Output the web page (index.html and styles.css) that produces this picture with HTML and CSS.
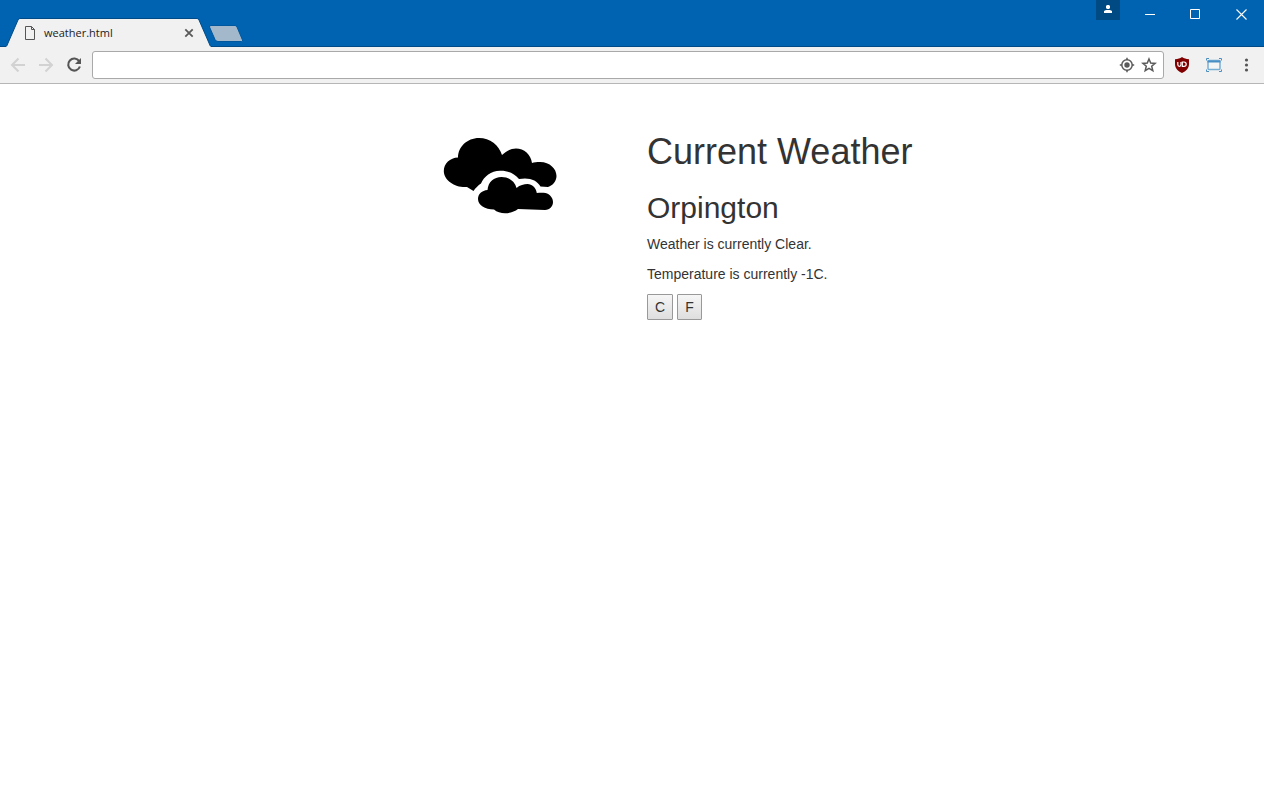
FILE: index.html
```html
<!DOCTYPE html>
<html lang="en">
<head>
<meta charset="utf-8">
<title>weather.html</title>
<link rel="stylesheet" href="styles.css">
</head>
<body>
<div class="browser">
  <header class="titlebar">
    <div class="tab">
      <svg class="tab-shape" width="207" height="29" viewBox="0 0 207 29" aria-hidden="true">
        <path d="M0 28.5H1.500L13 2Q13.500 .5 15 .5H192Q193.500 .5 194 2L205.500 28.500H207" fill="#f1f1f1" stroke="#004b87"/>
        <path d="M1.500 28.5H205.500" stroke="#f1f1f1"/>
      </svg>
      <svg class="tab-icon" width="12" height="14" viewBox="0 0 12 14" aria-hidden="true">
        <path d="M1.5 .5H7.5L10.5 3.5V13.5H1.5ZM7.5 .5V3.5H10.5" fill="none" stroke="#555"/>
      </svg>
      <span class="tab-title">weather.html</span>
      <button class="icon-button tab-close" type="button" aria-label="Close tab">
        <svg width="10" height="10" viewBox="0 0 10 10"><path d="M1.3 1.3L8.7 8.7M8.7 1.3L1.3 8.7" stroke="#5a5a5a" stroke-width="1.8"/></svg>
      </button>
    </div>
    <button class="icon-button new-tab" type="button" aria-label="New tab">
      <svg width="36" height="17" viewBox="0 0 36 17"><path d="M3 .5H27Q28.500 .5 29 2L34.500 15Q35 16.500 33.500 16.500H10Q8 16.500 7 14.500L1.500 2Q1 .5 3 .5Z" fill="#a3b8ca" stroke="#00579d"/></svg>
    </button>
    <div class="window-controls">
      <button class="icon-button profile" type="button" aria-label="Profile">
        <svg width="8" height="8" viewBox="0 0 8 8"><path d="M3 0H5L6 1V3L5 4H3L2 3V1ZM0 8V6L2 5H6L8 6V8Z" fill="#fff"/></svg>
      </button>
      <button class="icon-button minimize" type="button" aria-label="Minimize">
        <svg width="11" height="11" viewBox="0 0 11 11"><path d="M0 5.500H10" stroke="#fff"/></svg>
      </button>
      <button class="icon-button maximize" type="button" aria-label="Maximize">
        <svg width="11" height="11" viewBox="0 0 11 11"><path d="M.5 .5H9.500V9.500H.5Z" fill="none" stroke="#fff"/></svg>
      </button>
      <button class="icon-button close" type="button" aria-label="Close">
        <svg width="11" height="11" viewBox="0 0 11 11"><path d="M.5 .5L10.500 10.500M10.500 .5L.5 10.500" stroke="#fff" stroke-width="1.1"/></svg>
      </button>
    </div>
  </header>
  <nav class="toolbar" aria-label="Browser toolbar">
    <div class="history">
      <button class="icon-button" type="button" aria-label="Back">
        <svg width="16" height="16" viewBox="0 0 16 16"><path d="M15 8H2.500M8.500 1.500L2 8L8.500 14.500" fill="none" stroke="#d2d2d2" stroke-width="2"/></svg>
      </button>
      <button class="icon-button" type="button" aria-label="Forward">
        <svg width="16" height="16" viewBox="0 0 16 16"><path d="M1 8H13.500M7.500 1.500L14 8L7.500 14.500" fill="none" stroke="#d2d2d2" stroke-width="2"/></svg>
      </button>
      <button class="icon-button" type="button" aria-label="Reload">
        <svg width="16" height="16" viewBox="0 0 16 16"><path d="M13.200 4.200A6 6 0 1 0 13.900 9.500" fill="none" stroke="#555" stroke-width="2.100"/><path d="M15 1V7H9Z" fill="#555"/></svg>
      </button>
    </div>
    <div class="omnibox">
      <input class="address" type="text" aria-label="Address">
      <button class="icon-button" type="button" aria-label="Location">
        <svg width="16" height="16" viewBox="0 0 16 16"><circle cx="8" cy="8" r="5.200" fill="none" stroke="#5a5a5a" stroke-width="1.500"/><circle cx="8" cy="8" r="2.700" fill="#5a5a5a"/><path d="M8 .8V3M8 13V15.200M.8 8H3M13 8H15.200" stroke="#5a5a5a" stroke-width="1.500"/></svg>
      </button>
      <button class="icon-button" type="button" aria-label="Bookmark">
        <svg width="16" height="16" viewBox="0 0 16 16"><path d="M8 2L9.700 6.100L14.100 6.400L10.700 9.300L11.800 13.600L8 11.300L4.200 13.600L5.300 9.300L1.900 6.400L6.300 6.100Z" fill="none" stroke="#5a5a5a" stroke-width="1.500"/></svg>
      </button>
    </div>
    <div class="extensions">
      <button class="icon-button" type="button" aria-label="Content blocker">
        <svg width="16" height="16" viewBox="0 0 16 16"><path d="M8 0C10 1.500 12 2 15 2.200V7C15 11.500 12 14 8 16C4 14 1 11.500 1 7V2.200C4 2 6 1.500 8 0Z" fill="#800000"/><path d="M3.800 5V7.500Q3.800 9.300 5.400 9.300Q7 9.300 7 7.500V5" fill="none" stroke="#fff" stroke-width="1.200"/><path d="M8.300 5H10Q12.200 5 12.200 7.200Q12.200 9.300 10 9.300H8.300Z" fill="none" stroke="#fff" stroke-width="1.200"/></svg>
      </button>
      <button class="icon-button" type="button" aria-label="Window resizer">
        <svg width="16" height="16" viewBox="0 0 16 16"><path d="M.5 3.500V1.500H3M13 1.500H15.500V3.500M15.500 12.500V14.500H13M3 14.500H.5V12.500" fill="none" stroke="#4a8fc4"/><rect x="2" y="3.500" width="12" height="9" rx="1" fill="#f5f5f5" stroke="#78aed4" stroke-width="1.500"/><path d="M1.500 4.500H14.500" stroke="#4a8fc4" stroke-width="2"/></svg>
      </button>
      <button class="icon-button" type="button" aria-label="Menu">
        <svg width="16" height="16" viewBox="0 0 16 16"><g fill="#555"><circle cx="8.500" cy="3" r="1.600"/><circle cx="8.500" cy="8" r="1.600"/><circle cx="8.500" cy="13" r="1.600"/></g></svg>
      </button>
    </div>
  </nav>
  <main class="page">
    <div class="picture">
      <svg width="128" height="90" viewBox="0 2 128 90" role="img" aria-label="Clouds">
        <path d="M22 27.500C22 17 31 8 43 8C54 8 63 15 66 25C70 21 75 18.500 80 18.500C88 18.500 95 24.500 96 33C98 32 101 32 104 32C114 32 120.500 39 120.500 46C120.500 51 117 55.500 112 57L104.500 56.500C101 50 93 47 83 49C78 43 71 40.500 64 40.800C55 41 48 46.500 45 53.500C42 55.500 39.500 58 37.500 61L31 57C20 58 8 51 7.800 41C7.800 33.500 14 27.800 22 27.500Z"/>
        <path d="M51.500 60C52 52 58 47 65.500 47C73 47 79 51.500 80.500 58C84 55 88 54 91.500 54C96 54 100 57.500 100.800 63C104 62.500 107 62.500 109.500 63C114 64 117 68 117 72C117 76 114 79.800 109 80L82 79C76 84 64 85 58 79.500C49 79.500 42 75 42 69C42 64 46 60.500 51.500 60Z"/>
      </svg>
    </div>
    <section class="report">
      <h1 class="heading">Current Weather</h1>
      <h2 class="place">Orpington</h2>
      <p class="line">Weather is currently Clear.</p>
      <p class="line">Temperature is currently -1C.</p>
      <div class="units">
        <button class="unit" type="button">C</button>
        <button class="unit" type="button">F</button>
      </div>
    </section>
  </main>
</div>
</body>
</html>
```

FILE: styles.css
```css
* {
  box-sizing: border-box;
}

body {
  margin: 0;
  background: #fff;
  color: #333;
  font: 14px/20px "Liberation Sans", Arial, sans-serif;
}

svg {
  display: block;
}

.browser {
  display: flex;
  flex-direction: column;
  min-height: 100vh;
}

.icon-button {
  display: flex;
  align-items: center;
  justify-content: center;
  padding: 0;
  border: 0;
  background: none;
}

.titlebar {
  display: flex;
  align-items: flex-end;
  height: 47px;
  padding-left: 5px;
  background: #0063b1;
  box-shadow: inset 0 -1px #004b87;
}

.tab {
  position: relative;
  display: flex;
  align-items: center;
  width: 207px;
  height: 29px;
  padding: 0 18px 0 19px;
}

.tab-shape {
  position: absolute;
  inset: 0;
}

.tab-icon,
.tab-title,
.tab-close {
  position: relative;
}

.tab-title {
  flex: 1;
  margin-left: 8px;
  color: #222;
  font: 11px/16px "Open Sans", sans-serif;
}

.new-tab {
  margin: 0 0 5px -4px;
}

.window-controls {
  display: flex;
  align-self: flex-start;
  margin-left: auto;
}

.profile {
  width: 24px;
  height: 20px;
  padding-bottom: 2px;
  background: #004a84;
}

.minimize,
.maximize,
.close {
  height: 28px;
}

.minimize {
  width: 60px;
}

.maximize {
  width: 30px;
}

.close {
  width: 54px;
  padding-left: 8px;
}

.toolbar {
  display: flex;
  align-items: center;
  height: 37px;
  padding: 0 10px;
  border-bottom: 1px solid #b6b6b6;
  background: #f1f1f1;
}

.history {
  display: flex;
  gap: 12px;
}

.omnibox {
  display: flex;
  flex: 1;
  align-items: center;
  gap: 6px;
  height: 28px;
  margin: 0 10px;
  padding-right: 6px;
  border: 1px solid #a9a9a9;
  border-radius: 3px;
  background: #fff;
}

.address {
  flex: 1;
  min-width: 0;
  height: 24px;
  padding: 0 8px;
  border: 0;
  outline: 0;
  background: none;
  font: inherit;
}

.extensions {
  display: flex;
  gap: 16px;
}

.page {
  display: flex;
  flex: 1;
  padding: 48px 16px 0 calc(50% - 196px);
}

.picture {
  flex: 0 0 211px;
}

.heading,
.place {
  margin: 0;
  font-weight: 400;
}

.heading {
  padding-bottom: 20px;
  font-size: 36px;
  line-height: 40px;
}

.place {
  padding-bottom: 10px;
  font-size: 30px;
  line-height: 32px;
}

.line {
  margin: 0 0 10px;
}

.units {
  display: flex;
  gap: 4px;
}

.unit {
  height: 26px;
  padding: 0 7px;
  border: 1px solid #999;
  border-radius: 1px;
  background: linear-gradient(#f6f6f6, #dedede);
  color: #333;
  font: inherit;
}
```
